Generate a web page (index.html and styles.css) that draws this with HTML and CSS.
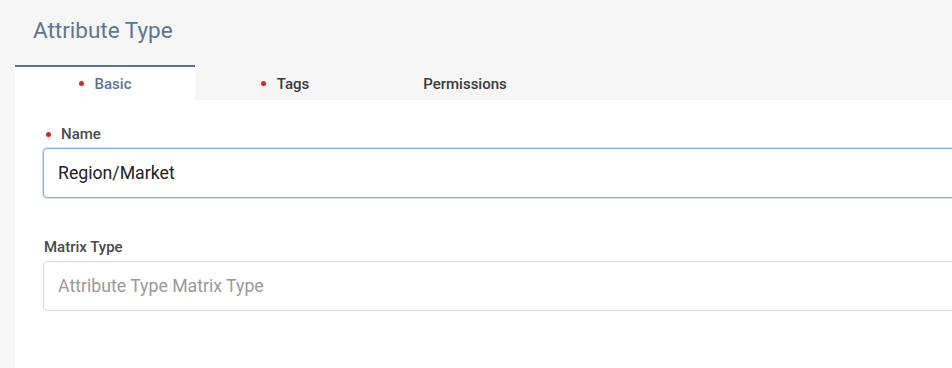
FILE: index.html
```html
<!DOCTYPE html>
<html lang="en">
<head>
  <meta charset="UTF-8">
  <title>Attribute Type</title>
  <link rel="stylesheet" href="styles.css">
</head>
<body>
  <div class="page">
    <h1 class="page-title">Attribute Type</h1>
    <div class="tabs">
      <div class="tab active"><span class="req-dot"></span>Basic</div>
      <div class="tab"><span class="req-dot"></span>Tags</div>
      <div class="tab">Permissions</div>
    </div>
    <div class="panel">
      <div class="field">
        <label class="field-label"><span class="req-dot"></span>Name</label>
        <input type="text" class="field-input focused" value="Region/Market">
      </div>
      <div class="field">
        <label class="field-label">Matrix Type</label>
        <input type="text" class="field-input" placeholder="Attribute Type Matrix Type">
      </div>
    </div>
  </div>
</body>
</html>
```

FILE: styles.css
```css
/* Global */
body {
  margin: 0;
  padding: 0;
  font-family: Roboto, 'Liberation Sans', sans-serif;
  background: #f6f6f6;
  color: #333;
}

.page {
  padding-left: 15px;
  height: 368px;
  display: flex;
  flex-direction: column;
  overflow: hidden;
}

.page-title {
  margin: 0;
  padding: 17px 0 0 18px;
  height: 65px;
  flex-shrink: 0;
  box-sizing: border-box;
  font-size: 22.5px;
  font-weight: 400;
  color: #5b7793;
}

/* Tabs */
.tabs {
  display: flex;
  height: 35px;
  flex-shrink: 0;
}

.tab {
  width: 180px;
  display: flex;
  align-items: center;
  justify-content: center;
  gap: 11px;
  font-size: 15px;
  font-weight: 500;
  color: #3a3a3a;
  border-top: 2px solid transparent;
  box-sizing: border-box;
}

.tab.active {
  background: #fff;
  border-top-color: #5b7590;
  color: #5b7590;
}

.req-dot {
  width: 5px;
  height: 5px;
  border-radius: 50%;
  background: #e2211c;
  display: inline-block;
}

/* Panel */
.panel {
  flex: 1;
  background: #fff;
  padding: 25px 0 0 28px;
  display: flex;
  flex-direction: column;
  gap: 40px;
  overflow: hidden;
}

.field {
  display: flex;
  flex-direction: column;
  gap: 5px;
}

.field-label {
  display: flex;
  align-items: center;
  gap: 10px;
  font-size: 15px;
  font-weight: 500;
  color: #4a4a4a;
  padding-left: 1px;
}

.field-label .req-dot {
  background: #c62828;
  margin-left: 2px;
}

.field-input {
  height: 50px;
  box-sizing: border-box;
  width: calc(100% + 20px);
  border: 1px solid #dcdcdc;
  border-radius: 4px;
  padding: 0 14px;
  font-family: Roboto, 'Liberation Sans', sans-serif;
  font-size: 17.7px;
  color: #222;
  outline: none;
}

.field-input.focused {
  border-color: #7eaff0;
  box-shadow: 0 0 0 1px rgba(126, 175, 240, 0.35);
}

.field-input::placeholder {
  color: #9a9a9a;
}
```
